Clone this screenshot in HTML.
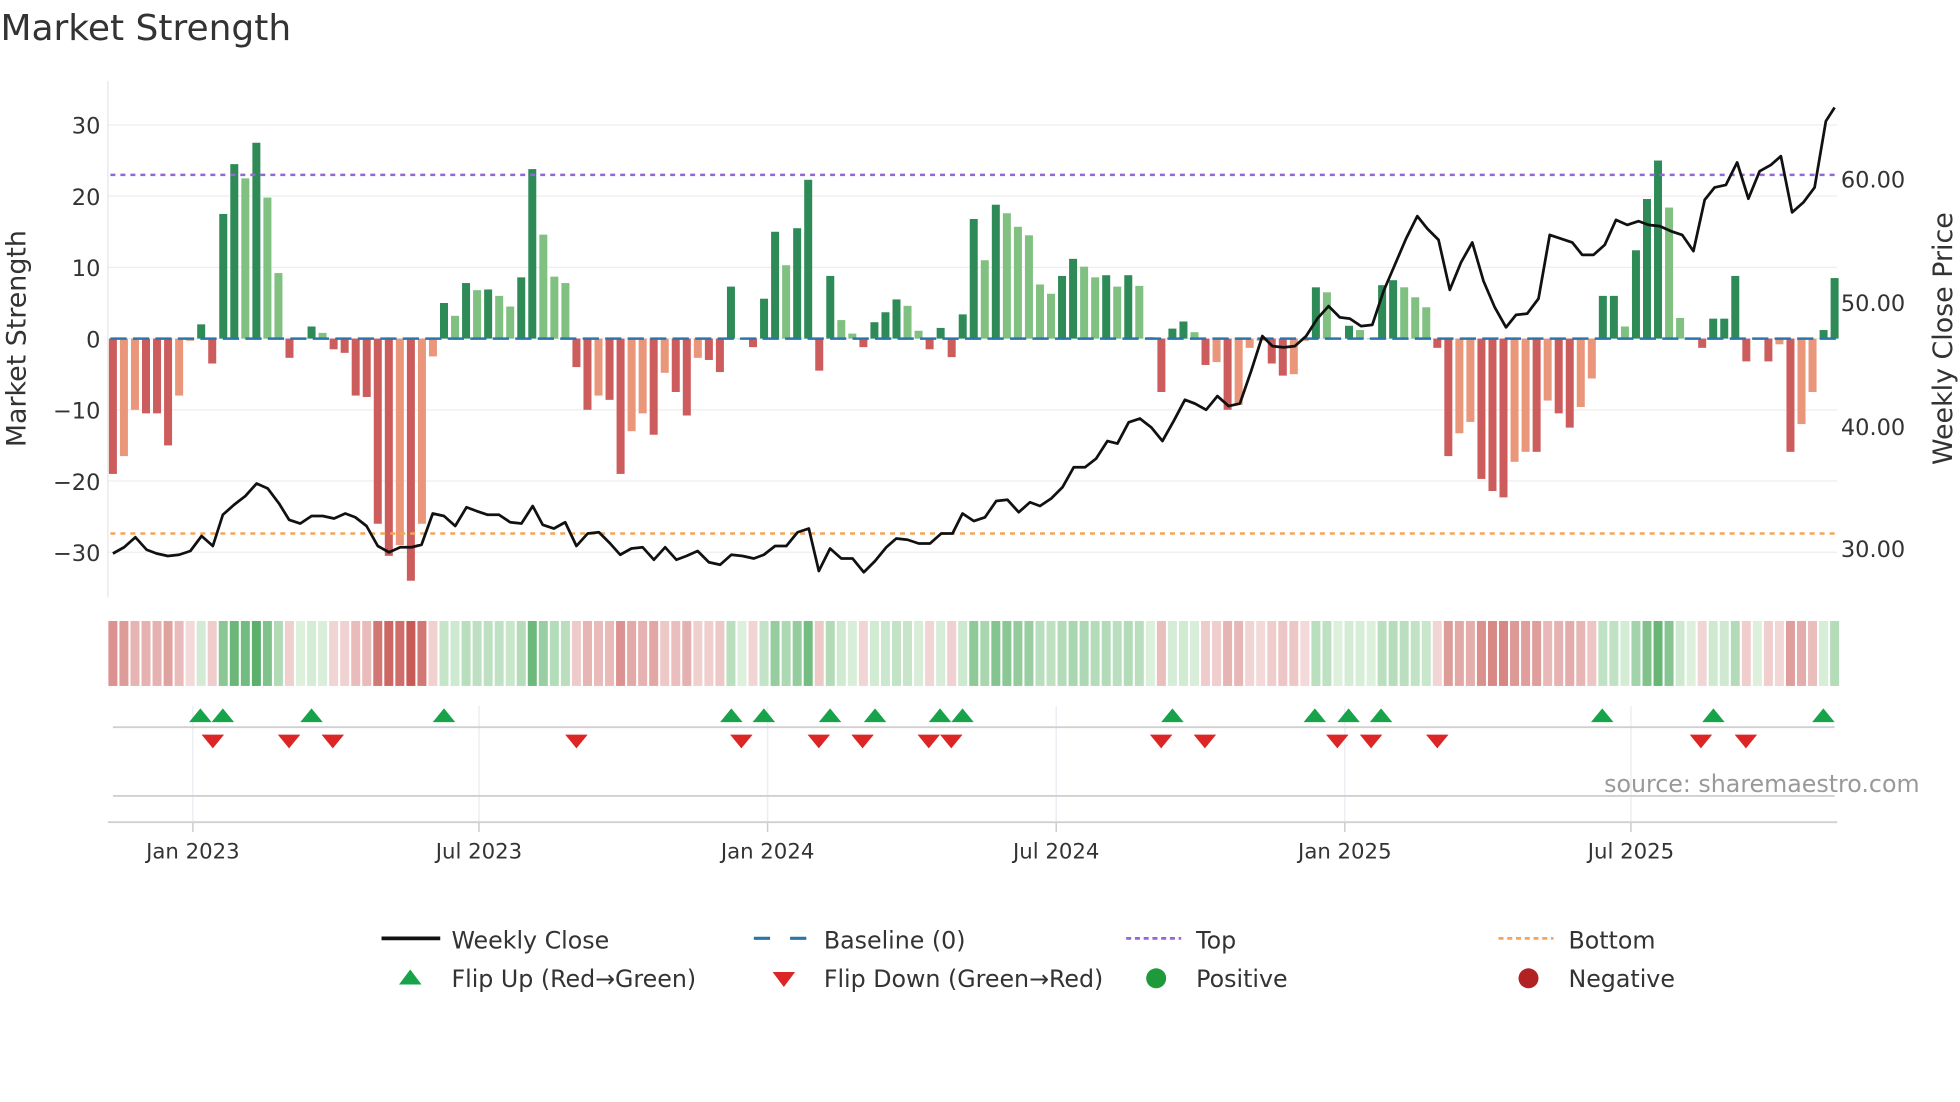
<!DOCTYPE html>
<html><head><meta charset="utf-8"><style>
html,body{margin:0;padding:0;background:#fff;width:1960px;height:1102px;overflow:hidden}
svg{display:block}
text{font-family:"DejaVu Sans","Liberation Sans",sans-serif;fill:#333}
</style></head><body>
<svg id="s" width="1960" height="1102" viewBox="0 0 1568 882" xmlns="http://www.w3.org/2000/svg">
<text x="0" y="32" font-size="28.8">Market Strength</text>
<g id="grid"></g>
<line x1="86" y1="65" x2="86" y2="478" stroke="#e6e6e6" stroke-width="1"/>
<g id="bars"></g>
<line x1="88" y1="140" x2="1470" y2="140" stroke="#9467d6" stroke-width="2" stroke-dasharray="4 4"/>
<line x1="88" y1="427" x2="1470" y2="427" stroke="#f4a55a" stroke-width="2" stroke-dasharray="4 4"/>
<line x1="88" y1="271" x2="1470" y2="271" stroke="#2b75ad" stroke-width="2" stroke-dasharray="13 5"/>
<polyline id="price" fill="none" stroke="#111" stroke-width="2.2" stroke-linejoin="round"/>
<g font-size="18">
<text x="80" y="107" text-anchor="end">30</text>
<text x="80" y="164" text-anchor="end">20</text>
<text x="80" y="221" text-anchor="end">10</text>
<text x="80" y="278" text-anchor="end">0</text>
<text x="80" y="335" text-anchor="end">−10</text>
<text x="80" y="392" text-anchor="end">−20</text>
<text x="80" y="449" text-anchor="end">−30</text>
<text x="1473" y="150">60.00</text>
<text x="1473" y="249">50.00</text>
<text x="1473" y="348">40.00</text>
<text x="1473" y="446">30.00</text>
</g>
<text transform="translate(20,271) rotate(-90)" text-anchor="middle" font-size="21.5">Market Strength</text>
<text transform="translate(1562,271) rotate(-90)" text-anchor="middle" font-size="21.5">Weekly Close Price</text>
<g id="strip"></g>
<g id="vg"></g>
<line x1="90" y1="582" x2="1468" y2="582" stroke="#d0d0d0" stroke-width="1.5"/>
<line x1="90" y1="637" x2="1468" y2="637" stroke="#d0d0d0" stroke-width="1.5"/>
<line x1="86" y1="658" x2="1470" y2="658" stroke="#d0d0d0" stroke-width="1.5"/>
<g id="marks"></g>
<text x="1536" y="634" text-anchor="end" font-size="19" style="fill:#999">source: sharemaestro.com</text>
<g font-size="17" text-anchor="middle" id="xt"></g>
<g font-size="19">
<line x1="305" y1="751" x2="352" y2="751" stroke="#111" stroke-width="3"/>
<text x="361" y="759">Weekly Close</text>
<line x1="603" y1="751" x2="650" y2="751" stroke="#2b75ad" stroke-width="2.5" stroke-dasharray="13 16"/>
<text x="659" y="759">Baseline (0)</text>
<line x1="901" y1="751" x2="945" y2="751" stroke="#9467d6" stroke-width="2.2" stroke-dasharray="4 3"/>
<text x="957" y="759">Top</text>
<line x1="1199" y1="751" x2="1243" y2="751" stroke="#f4a55a" stroke-width="2.2" stroke-dasharray="4 3"/>
<text x="1255" y="759">Bottom</text>
<polygon points="319,788 328,776 337,788" fill="#16a34a"/>
<text x="361" y="790">Flip Up (Red→Green)</text>
<polygon points="618,778 636,778 627,790" fill="#dc2626"/>
<text x="659" y="790">Flip Down (Green→Red)</text>
<circle cx="925" cy="783" r="8" fill="#1e9a3a"/>
<text x="957" y="790">Positive</text>
<circle cx="1223" cy="783" r="8" fill="#b22222"/>
<text x="1255" y="790">Negative</text>
</g>
</svg>
<script>
var NS="http://www.w3.org/2000/svg";
function el(p,t,a){var e=document.createElementNS(NS,t);for(var k in a)e.setAttribute(k,a[k]);document.getElementById(p).appendChild(e);return e;}
var v=[-19,-16.5,-10,-10.5,-10.5,-15,-8,-0.3,2,-3.5,17.5,24.5,22.5,27.5,19.8,9.2,-2.7,0,1.7,0.8,-1.5,-2,-8,-8.2,-26,-30.5,-29,-34,-26,-2.5,5,3.2,7.8,6.8,6.9,6,4.5,8.6,23.8,14.6,8.7,7.8,-4,-10,-8,-8.6,-19,-13,-10.5,-13.5,-4.8,-7.5,-10.8,-2.7,-3,-4.7,7.3,0,-1.2,5.6,15,10.3,15.5,22.3,-4.5,8.8,2.6,0.7,-1.2,2.3,3.7,5.5,4.6,1.1,-1.5,1.5,-2.6,3.4,16.8,11,18.8,17.6,15.7,14.5,7.6,6.3,8.8,11.2,10.1,8.6,8.9,7.3,8.9,7.4,0.2,-7.5,1.4,2.4,0.9,-3.7,-3.3,-10,-9.3,-1.3,-0.3,-3.5,-5.2,-5,-0.3,7.2,6.5,0,1.8,1.2,0,7.5,8.2,7.2,5.8,4.4,-1.3,-16.5,-13.3,-11.7,-19.7,-21.4,-22.3,-17.3,-15.9,-15.9,-8.7,-10.5,-12.5,-9.6,-5.6,6,6,1.7,12.4,19.6,25,18.4,2.9,0,-1.3,2.8,2.8,8.8,-3.2,0,-3.2,-0.8,-15.9,-12,-7.5,1.2,8.5];
var n=v.length, st=(1468-90)/(n-1);
function X(i){return 90+i*st;}
function Y(val){return 271-val*5.7;}
[30,20,10,0,-10,-20,-30].forEach(function(g){el("grid","line",{x1:86,x2:1470,y1:Y(g),y2:Y(g),stroke:"#eeeeee","stroke-width":1});});
for(var i=0;i<n;i++){
 var a=v[i],prev=i?v[i-1]:0,c;
 if(a>=0)c=(a>=prev)?"#2e8b57":"#80c080";else c=(a<=prev)?"#cd5c5c":"#e9967a";
 var y1=Y(Math.max(a,0)),y2=Y(Math.min(a,0));
 el("bars","rect",{x:X(i)-3.2,y:y1,width:6.4,height:Math.max(y2-y1,0.5),fill:c});
 var t,col;
 if(a>=0){t=Math.min(a/30,1);col="rgb("+Math.round(220-(220-80)*t)+","+Math.round(240-(240-170)*t)+","+Math.round(220-(220-98)*t)+")";}
 else{t=Math.min(-a/34,1);col="rgb("+Math.round(243-(243-200)*t)+","+Math.round(218-(218-90)*t)+","+Math.round(218-(218-85)*t)+")";}
 el("strip","rect",{x:X(i)-3.6,y:497,width:7.2,height:52,fill:col});
}
var p=[[90,443],[99,438],[108,430],[117,440],[125,443],[134,445],[143,444],[152,441],[161,429],[170,437],[178,412],[187,404],[196,397],[205,387],[214,391],[223,403],[231,416],[240,419],[249,413],[258,413],[267,415],[276,411],[284,414],[293,421],[302,437],[311,442],[320,438],[329,438],[337,436],[346,411],[355,413],[364,421],[373,406],[381,409],[390,412],[399,412],[408,418],[417,419],[426,405],[434,420],[443,423],[452,418],[461,437],[470,427],[479,426],[488,435],[496,444],[505,439],[514,438],[523,448],[532,438],[541,448],[549,445],[558,441],[567,450],[576,452],[585,444],[594,445],[603,447],[611,444],[620,437],[629,437],[638,426],[647,423],[655,457],[664,439],[673,447],[682,447],[691,458],[700,449],[709,438],[717,431],[726,432],[735,435],[744,435],[753,427],[762,427],[770,411],[779,417],[788,414],[797,401],[806,400],[815,410],[824,402],[832,405],[841,399],[850,390],[859,374],[868,374],[877,367],[886,353],[894,355],[903,338],[912,335],[921,342],[930,353],[939,337],[948,320],[956,323],[965,328],[974,317],[983,325],[992,323],[1001,297],[1010,269],[1018,277],[1027,278],[1036,277],[1045,269],[1054,255],[1063,245],[1072,254],[1080,255],[1089,261],[1098,260],[1107,233],[1116,212],[1125,191],[1134,173],[1142,183],[1151,192],[1160,232],[1169,210],[1178,194],[1187,225],[1196,246],[1205,262],[1213,252],[1222,251],[1231,239],[1240,188],[1249,191],[1258,194],[1266,204],[1275,204],[1284,196],[1293,176],[1302,180],[1311,177],[1319,180],[1328,181],[1337,185],[1346,188],[1355,201],[1364,160],[1372,150],[1381,148],[1390,130],[1399,159],[1408,137],[1417,132],[1425,125],[1434,170],[1443,162],[1452,150],[1461,97],[1468,86]];
document.getElementById("price").setAttribute("points",p.map(function(q){return q.join(",");}).join(" "));
var ticks=[[154,"Jan 2023"],[383,"Jul 2023"],[614,"Jan 2024"],[845,"Jul 2024"],[1076,"Jan 2025"],[1305,"Jul 2025"]];
ticks.forEach(function(t){
 el("vg","line",{x1:t[0],x2:t[0],y1:565,y2:658,stroke:"#eceef4","stroke-width":1.2});
 el("vg","line",{x1:t[0],x2:t[0],y1:658,y2:666,stroke:"#ccc","stroke-width":1.2});
 var tx=el("xt","text",{x:t[0],y:687});tx.textContent=t[1];
});
[160,178,249,355,585,611,664,700,752,770,938,1052,1079,1105,1282,1371,1459].forEach(function(x){
 el("marks","polygon",{points:(x-9)+",578 "+x+",567 "+(x+9)+",578",fill:"#16a34a"});});
[170,231,266,461,593,655,690,743,761,929,964,1070,1097,1150,1361,1397].forEach(function(x){
 el("marks","polygon",{points:(x-9)+",588 "+(x+9)+",588 "+x+",599",fill:"#dc2626"});});
</script>
</body></html>
